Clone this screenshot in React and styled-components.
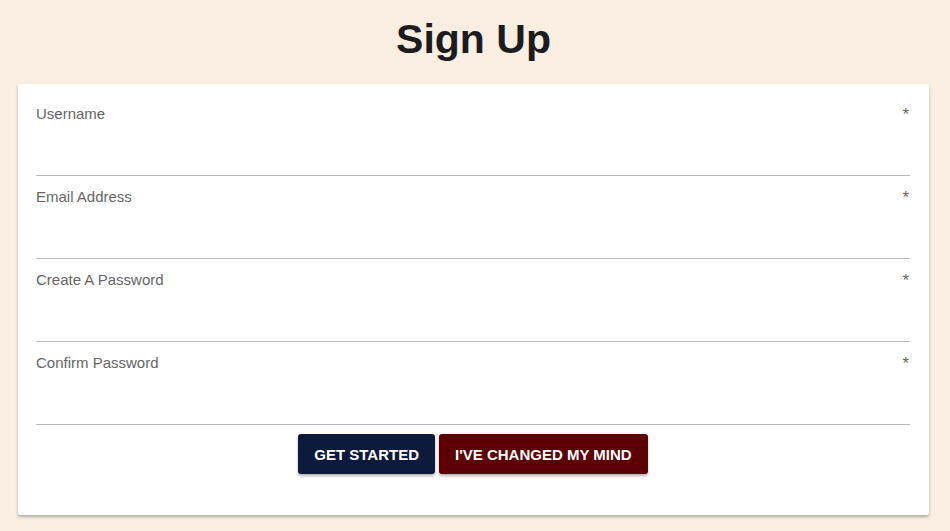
import React from 'react';
import styled, { createGlobalStyle } from 'styled-components';

const GlobalStyle = createGlobalStyle`
    body {
        margin: 0;
        background-color: #faeee2;
        font-family: "Liberation Sans", Arial, sans-serif;
    }
`

const fields = ['Username', 'Email Address', 'Create A Password', 'Confirm Password'];

const App = () => {
    return (
        <>
            <GlobalStyle />
            <Page>
                <Title>Sign Up</Title>
                <Card>
                    {fields.map((label) => (
                        <Field key={label}>
                            <Label>{label}</Label>
                            <Required>*</Required>
                        </Field>
                    ))}
                    <Actions>
                        <Button color="#0e1a3b">Get Started</Button>
                        <Button color="#5c0004">I've Changed My Mind</Button>
                    </Actions>
                </Card>
            </Page>
        </>
    )
}

const Page = styled.div`
    display: flex;
    flex-direction: column;
    padding: 0 21px 16px 18px;
`
const Title = styled.h1`
    margin: 0;
    height: 84px;
    padding-bottom: 6px;
    box-sizing: border-box;
    display: flex;
    align-items: center;
    justify-content: center;
    font-size: 41px;
    font-weight: 700;
    color: #1c1c1e;
`
const Card = styled.div`
    background: #ffffff;
    padding: 9px 19px 41px 18px;
    box-shadow: 0 2px 3px rgba(0, 0, 0, 0.28);
    border-radius: 2px;
`
const Field = styled.div`
    height: 83px;
    display: flex;
    justify-content: space-between;
    align-items: flex-start;
    padding-top: 12px;
    box-sizing: border-box;
    border-bottom: 1px solid #b9b9b9;
`
const Label = styled.span`
    font-size: 15px;
    color: #666666;
`
const Required = styled.span`
    font-size: 17px;
    color: #666666;
    margin-right: 1px;
`
const Actions = styled.div`
    display: flex;
    justify-content: center;
    gap: 4px;
    margin-top: 9px;
`
const Button = styled.button`
    height: 40px;
    padding: 0 16px;
    border: none;
    border-radius: 3px;
    background: ${(props) => props.color};
    color: #ffffff;
    font-family: "Liberation Sans", Arial, sans-serif;
    font-size: 15px;
    font-weight: 700;
    text-transform: uppercase;
    box-shadow: 0 2px 3px rgba(0, 0, 0, 0.3);
    cursor: pointer;
`

export default App
